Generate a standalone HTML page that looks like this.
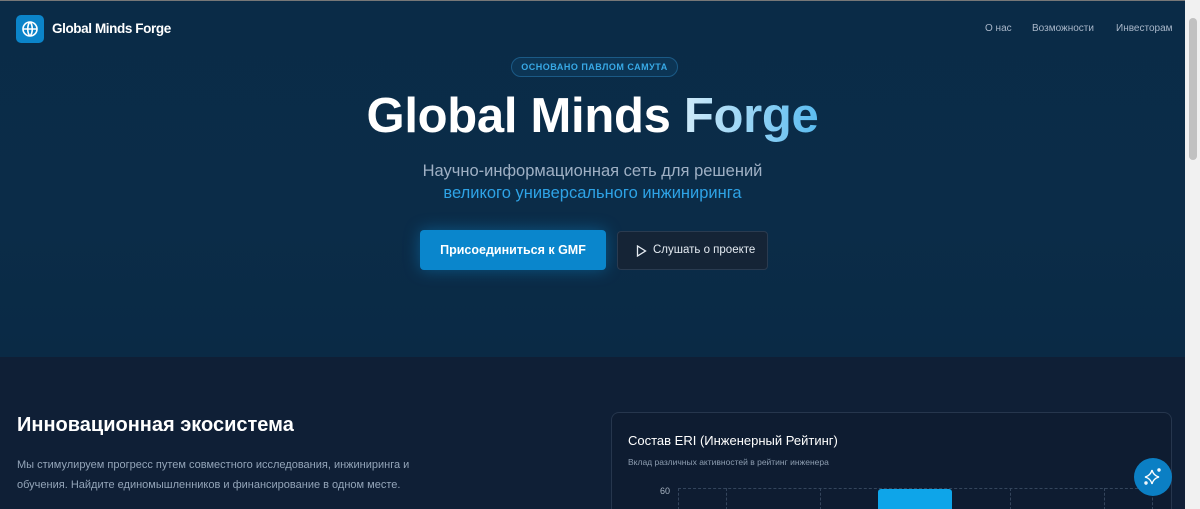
<!DOCTYPE html>
<html><head><meta charset="utf-8"><style>
*{margin:0;padding:0;box-sizing:border-box}
html,body{width:1200px;height:509px;overflow:hidden}
body{font-family:"Liberation Sans",sans-serif;background:#0f1f36;position:relative}
.hero{position:absolute;left:0;top:0;width:1185px;height:357px;background:linear-gradient(180deg,#0a2b47 0%,#0b2c48 60%,#0a2a45 100%);border-top:1px solid #777}
.logo{position:absolute;left:16px;top:14px;width:28px;height:28px;border-radius:5px;background:#0b84c9}
.brand{position:absolute;left:52px;top:20px;color:#fff;font-weight:bold;font-size:13.5px;letter-spacing:-0.4px}
.nav{position:absolute;top:22px;font-size:10px;color:#a8b6c8}
.badge{position:absolute;left:511px;top:56px;width:167px;height:20px;border:1px solid #1b5a86;background:#0c3555;border-radius:10px;color:#38a9e6;font-size:9px;font-weight:bold;text-align:center;line-height:19px;letter-spacing:0.5px}
h1{position:absolute;left:0;width:1185px;top:86px;text-align:center;font-size:49px;line-height:58px;font-weight:bold;color:#fff;letter-spacing:-0.3px}
h1 span{background:linear-gradient(90deg,#cfeaf9,#5bbcf0);-webkit-background-clip:text;color:transparent}
.sub{position:absolute;left:0;width:1185px;text-align:center;font-size:16.5px;color:#9fb0c4}
.btn1{position:absolute;left:420px;top:229px;width:186px;height:40px;border-radius:4px;background:#0a86cc;color:#fff;font-weight:bold;font-size:12.5px;text-align:center;line-height:40px;box-shadow:0 0 16px rgba(14,140,210,.45)}
.btn2{position:absolute;left:617px;top:230px;width:151px;height:39px;border-radius:4px;background:#152436;border:1px solid #2a3b50;color:#e5ebf2;font-size:11.5px;line-height:37px;padding-left:35px}
.h2{position:absolute;left:17px;top:414px;color:#fff;font-size:20px;font-weight:bold}
.p{position:absolute;left:17px;top:455px;color:#94a5b9;font-size:11px;line-height:20px;width:420px}
.card{position:absolute;left:611px;top:412px;width:561px;height:97px;border:1px solid #26364d;border-bottom:none;border-radius:8px 8px 0 0;background:#0e1c31;overflow:hidden}
.ct{position:absolute;left:16px;top:20px;color:#fff;font-size:13px}
.cs{position:absolute;left:16px;top:44px;color:#8d9db0;font-size:8.5px}
.vl{position:absolute;top:75px;height:22px;border-left:1px dashed #34455c}
.fab{position:absolute;left:1134px;top:458px;width:38px;height:38px;border-radius:50%;background:#0b7fc4}
.sb{position:absolute;left:1185px;top:0;width:15px;height:509px;background:#f1f1f1}
</style></head><body>
<div class="hero">
<div class="logo"><svg width="28" height="28" viewBox="0 0 28 28" fill="none" stroke="#fff" stroke-width="1.6"><circle cx="14" cy="14" r="7"/><path d="M7 14h14M14 7c-3 3-3 11 0 14M14 7c3 3 3 11 0 14"/></svg></div>
<div class="brand">Global Minds Forge</div>
<div class="nav" style="left:985px">О нас</div>
<div class="nav" style="left:1032px">Возможности</div>
<div class="nav" style="left:1116px">Инвесторам</div>
<div class="badge">ОСНОВАНО ПАВЛОМ САМУТА</div>
<h1>Global Minds <span>Forge</span></h1>
<div class="sub" style="top:161px">Научно-информационная сеть для решений</div>
<div class="sub" style="top:183px;color:#2ea3e6">великого универсального инжиниринга</div>
<div class="btn1">Присоединиться к GMF</div>
<div class="btn2"><svg style="position:absolute;left:18px;top:13px" width="11" height="12" viewBox="0 0 11 12" fill="none" stroke="#e5ebf2" stroke-width="1.3"><path d="M1.5 1v10l8-5z"/></svg>Слушать о проекте</div>
</div>
<div class="h2">Инновационная экосистема</div>
<div class="p">Мы стимулируем прогресс путем совместного исследования, инжиниринга и обучения. Найдите единомышленников и финансирование в одном месте.</div>
<div class="card">
<div class="ct">Состав ERI (Инженерный Рейтинг)</div>
<div class="cs">Вклад различных активностей в рейтинг инженера</div>
<div style="position:absolute;left:48px;top:73px;color:#aab6c4;font-size:9px">60</div>
<div style="position:absolute;left:66px;top:75px;width:480px;border-top:1px dashed #34455c"></div>
<div class="vl" style="left:66px"></div><div class="vl" style="left:114px"></div><div class="vl" style="left:208px"></div><div class="vl" style="left:398px"></div><div class="vl" style="left:492px"></div><div class="vl" style="left:540px"></div>
<div style="position:absolute;left:266px;top:76px;width:74px;height:21px;background:#0ea5e9;border-radius:3px 3px 0 0"></div>
</div>
<div class="fab"><svg width="38" height="38" viewBox="0 0 38 38" fill="none" stroke="#fff" stroke-width="1.4"><path d="M18 12c1 4 3 6 7 7-4 1-6 3-7 7-1-4-3-6-7-7 4-1 6-3 7-7z"/><circle cx="25" cy="12" r="1"/><circle cx="12" cy="25" r="1"/></svg></div>
<div class="sb"><div style="position:absolute;left:4px;top:18px;width:8px;height:142px;background:#c1c1c1;border-radius:4px"></div></div>
</body></html>
